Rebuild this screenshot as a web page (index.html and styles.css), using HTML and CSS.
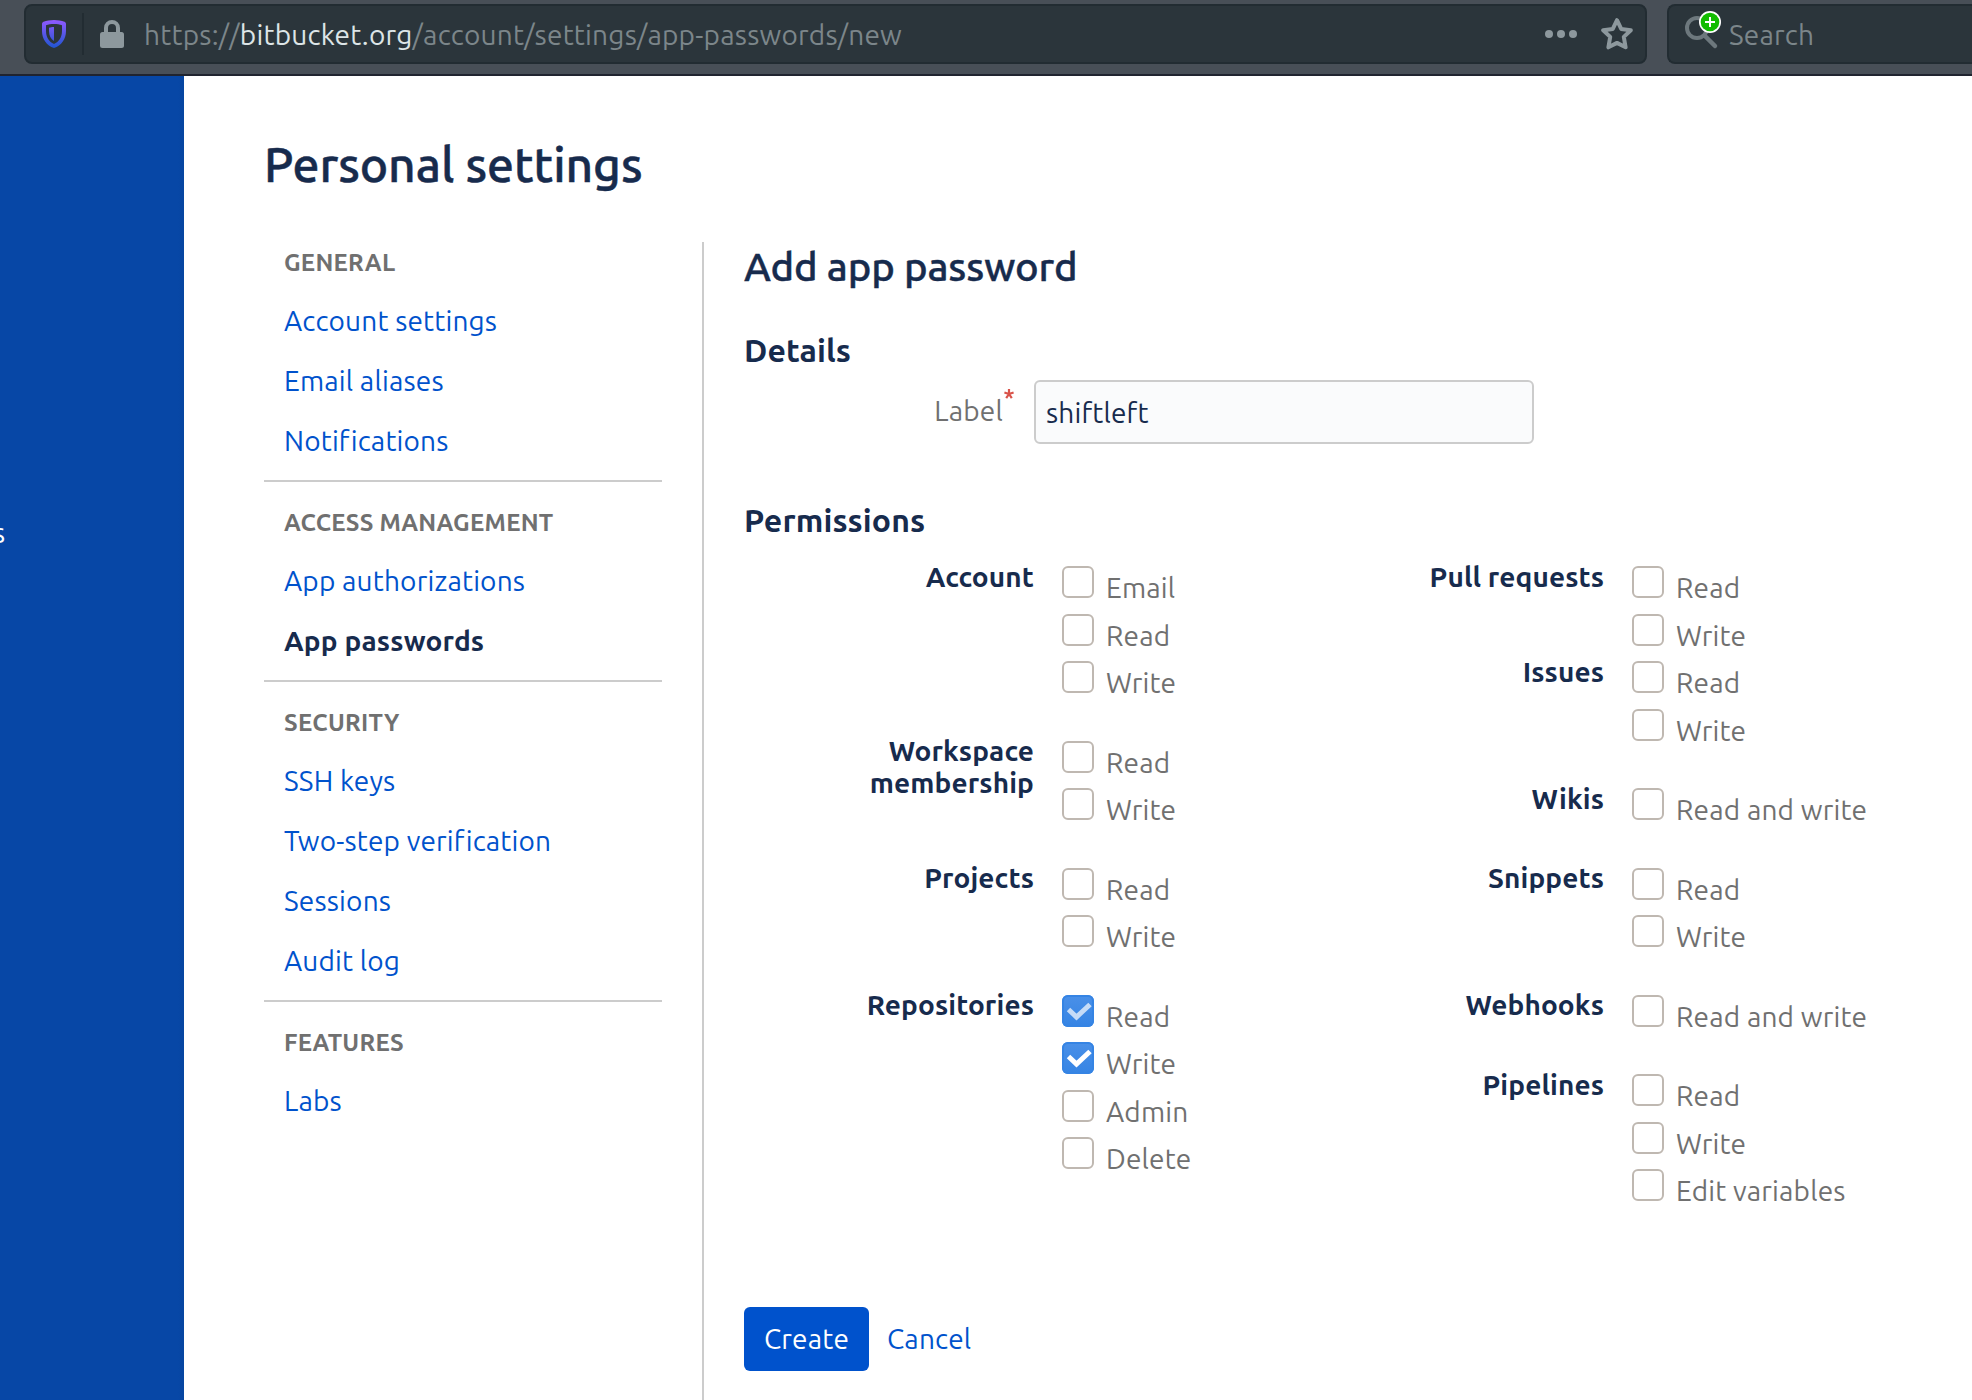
FILE: index.html
```html
<!DOCTYPE html>
<html lang="en">
<head>
<meta charset="utf-8">
<title>Personal settings</title>
<link rel="stylesheet" href="styles.css">
</head>
<body>
<header class="toolbar">
  <div class="urlbar">
    <svg class="shield" width="24" height="28" viewBox="0 0 24 28">
      <defs><linearGradient id="sg" x1="0" y1="0" x2="0" y2="1"><stop offset="0" stop-color="#9059ff"/><stop offset="1" stop-color="#1f55d0"/></linearGradient></defs>
      <path fill="url(#sg)" fill-rule="evenodd" d="M12 0C8 0 4.500 .8 1.600 1.800C.6 2.200 0 3 0 4v7c0 8 4.500 14.500 12 17c7.500-2.500 12-9 12-17V4c0-1-.6-1.800-1.600-2.200C19.500 .8 16 0 12 0zM12 4c3 0 5.700 .5 8 1.200V11c0 6-3 10.800-8 13c-5-2.200-8-7-8-13V5.200C6.300 4.500 9 4 12 4zM12 7c-2 0-3.500 .3-5 .7V11c0 4.500 1.800 8 5 10z"/>
    </svg>
    <span class="divider"></span>
    <svg class="lock" width="24" height="28" viewBox="0 0 24 28">
      <path d="M6 13V8a6 6 0 0 1 12 0v5" fill="none" stroke="#8d989d" stroke-width="4"/>
      <rect y="12" width="24" height="16" rx="2.500" fill="#8d989d"/>
    </svg>
    <div class="url">https://<span class="host">bitbucket.org</span>/account/settings/app-passwords/new</div>
    <svg class="dots" width="32" height="8" viewBox="0 0 32 8" fill="#8d989d"><circle cx="4" cy="4" r="4"/><circle cx="16" cy="4" r="4"/><circle cx="28" cy="4" r="4"/></svg>
    <svg class="star" width="32" height="32" viewBox="0 0 32 32">
      <path d="M16 2.200L20.200 10.900L29.800 12.200L22.800 18.900L24.600 29.300L16 24.900L7.400 29.300L9.200 18.900L2.200 12.200L11.800 10.900Z" fill="none" stroke="#8d989d" stroke-width="4" stroke-linejoin="round"/>
    </svg>
  </div>
  <div class="search">
    <svg width="38" height="40" viewBox="0 0 38 40">
      <circle cx="12" cy="18" r="10" fill="none" stroke="#6d787d" stroke-width="4"/>
      <path d="M19.500 25.500L30 36" stroke="#6d787d" stroke-width="4.500" stroke-linecap="round"/>
      <circle cx="25" cy="12" r="11" fill="#fff"/>
      <circle cx="25" cy="12" r="9.300" fill="#12bc00"/>
      <path d="M25 7v10M20 12h10" stroke="#fff" stroke-width="2"/>
    </svg>
    <span>Search</span>
  </div>
</header>
<div class="page">
  <aside class="rail"><span>s</span></aside>
  <main class="content">
    <h1>Personal settings</h1>
    <div class="columns">
      <nav class="nav">
        <section>
          <h2>GENERAL</h2>
          <a>Account settings</a><a>Email aliases</a><a>Notifications</a>
        </section>
        <section>
          <h2>ACCESS MANAGEMENT</h2>
          <a>App authorizations</a><a class="current">App passwords</a>
        </section>
        <section>
          <h2>SECURITY</h2>
          <a>SSH keys</a><a>Two-step verification</a><a>Sessions</a><a>Audit log</a>
        </section>
        <section>
          <h2>FEATURES</h2>
          <a>Labs</a>
        </section>
      </nav>
      <form class="form">
        <h2>Add app password</h2>
        <h3 class="details">Details</h3>
        <div class="field">
          <label>Label<svg width="10" height="10" viewBox="0 0 10 10"><path d="M5 5V0M5 5L.4 3.500M5 5L9.600 3.500M5 5L2.200 9.200M5 5L7.800 9.200" stroke="#d9534a" stroke-width="2.200"/></svg></label>
          <div class="input">shiftleft</div>
        </div>
        <h3>Permissions</h3>
        <div class="permissions">
          <div>
            <div class="group"><h4>Account</h4><ul><li><i></i><span>Email</span></li><li><i></i><span>Read</span></li><li><i></i><span>Write</span></li></ul></div>
            <div class="group"><h4>Workspace membership</h4><ul><li><i></i><span>Read</span></li><li><i></i><span>Write</span></li></ul></div>
            <div class="group"><h4>Projects</h4><ul><li><i></i><span>Read</span></li><li><i></i><span>Write</span></li></ul></div>
            <div class="group"><h4>Repositories</h4><ul>
              <li><i class="on locked"><svg width="32" height="32" viewBox="0 0 32 32"><path d="M6.500 14.500L14.500 22L28 9.500" fill="none" stroke="#fff" stroke-width="5"/></svg></i><span>Read</span></li>
              <li><i class="on"><svg width="32" height="32" viewBox="0 0 32 32"><path d="M6.500 14.500L14.500 22L28 9.500" fill="none" stroke="#fff" stroke-width="5"/></svg></i><span>Write</span></li>
              <li><i></i><span>Admin</span></li><li><i></i><span>Delete</span></li></ul></div>
          </div>
          <div>
            <div class="group joined"><h4>Pull requests</h4><ul><li><i></i><span>Read</span></li><li><i></i><span>Write</span></li></ul></div>
            <div class="group"><h4>Issues</h4><ul><li><i></i><span>Read</span></li><li><i></i><span>Write</span></li></ul></div>
            <div class="group"><h4>Wikis</h4><ul><li><i></i><span>Read and write</span></li></ul></div>
            <div class="group"><h4>Snippets</h4><ul><li><i></i><span>Read</span></li><li><i></i><span>Write</span></li></ul></div>
            <div class="group"><h4>Webhooks</h4><ul><li><i></i><span>Read and write</span></li></ul></div>
            <div class="group"><h4>Pipelines</h4><ul><li><i></i><span>Read</span></li><li><i></i><span>Write</span></li><li><i></i><span>Edit variables</span></li></ul></div>
          </div>
        </div>
        <div class="actions"><button type="button">Create</button><a>Cancel</a></div>
      </form>
    </div>
  </main>
</div>
</body>
</html>
```
FILE: styles.css
```css
* { box-sizing: border-box; }
body {
  margin: 0;
  height: 1400px;
  display: flex;
  flex-direction: column;
  overflow: hidden;
  background: #fff;
  color: #172b4d;
  font: 28px "Ubuntu", "Noto Sans", sans-serif;
  letter-spacing: .17px;
}
h1, h2, h3, h4, ul { margin: 0; padding: 0; list-style: none; }
svg { display: block; flex: none; }

/* Browser toolbar */
.toolbar {
  flex: none;
  height: 76px;
  display: flex;
  gap: 20px;
  padding: 4px 0 0 24px;
  background: #484f57;
  border-bottom: 2px solid #20242f;
}
.urlbar, .search {
  height: 60px;
  display: flex;
  align-items: center;
  background: #2b353b;
  border: 2px solid #222c32;
  border-radius: 8px;
  color: #7c868a;
  line-height: 57px;
}
.urlbar { width: 1623px; padding: 0 12px 0 16px; }
.shield { margin-top: -1px; }
.divider { width: 2px; height: 42px; margin: 0 16px; background: #222c32; }
.url { flex: 1; margin-left: 20px; white-space: nowrap; letter-spacing: .22px; }
.host { color: #dde5e7; }
.dots { margin-right: 24px; }
.search {
  flex: 1;
  padding-left: 16px;
  border-right: 0;
  border-radius: 8px 0 0 8px;
}
.search svg { margin-right: 6px; margin-top: -8px; }

/* Page frame */
.page { flex: 1; display: flex; }
.rail {
  width: 184px;
  padding-top: 437px;
  background: linear-gradient(to left, #0645a0, #0747a6 6px);
  color: #fff;
  line-height: 40px;
}
.rail span { margin-left: -7px; }
.content {
  flex: 1;
  display: flex;
  flex-direction: column;
  padding: 58px 0 0 80px;
}
h1 {
  font-size: 48px;
  font-weight: 500;
  line-height: 60px;
  letter-spacing: -.07px;
  -webkit-text-stroke: .5px;
}
.columns { flex: 1; display: flex; margin-top: 48px; }

/* Settings navigation */
.nav { width: 398px; }
.nav section { padding-top: 1px; }
.nav section + section { margin-top: 9px; padding-top: 21px; border-top: 2px solid #ccc; }
.nav h2 {
  margin: 0 0 8px 20px;
  color: #707070;
  font-size: 24px;
  font-weight: 700;
  line-height: 40px;
  letter-spacing: .26px;
}
.nav a {
  display: block;
  margin-left: 20px;
  color: #0052cc;
  line-height: 60px;
}
.nav a.current { color: #172b4d; font-weight: 700; }

/* App password form */
.form {
  flex: 1;
  margin-left: 40px;
  padding-left: 40px;
  border-left: 2px solid #ccc;
}
.form h2 {
  font-size: 40px;
  font-weight: 500;
  line-height: 50px;
  letter-spacing: -.14px;
  -webkit-text-stroke: .4px;
}
.form h3 { font-size: 32px; font-weight: 700; line-height: 40px; letter-spacing: .12px; }
.form h3.details { margin: 38px 0 10px; }
.field { display: flex; gap: 20px; margin-bottom: 56px; }
.field label {
  width: 270px;
  display: flex;
  gap: 1px;
  justify-content: flex-end;
  color: #707070;
  line-height: 62px;
}
.field label svg { margin-top: 9px; }
.input {
  width: 500px;
  height: 64px;
  padding-left: 10px;
  border: 2px solid #ccc;
  border-radius: 6px;
  background: #fafbfc;
  line-height: 61px;
}
.permissions { display: grid; grid-template-columns: 570px 570px; margin-top: 20px; }
.group { display: flex; gap: 28px; padding-bottom: 32.100px; }
.group.joined { padding-bottom: 0; }
.group h4 {
  width: 290px;
  margin-top: .6px;
  text-align: right;
  font-size: 28px;
  font-weight: 700;
  line-height: 32px;
  letter-spacing: .12px;
}
.group li {
  display: flex;
  gap: 12px;
  height: 47.500px;
  color: #707070;
  line-height: 48px;
}
.group li span { margin-top: 4.050px; white-space: nowrap; }
.group i {
  width: 32px;
  height: 32px;
  margin-top: 6px;
  border: 2px solid #bfb8b1;
  border-radius: 6px;
}
.group i.on { border: 0; background: linear-gradient(#4a90e8, #3584e4); box-shadow: inset 0 0 0 2px #3584e4; }
.group i.locked svg { opacity: .7; }
.actions { display: flex; align-items: center; gap: 18px; margin-top: 64px; }
.actions button {
  width: 125px;
  height: 64px;
  padding: 0;
  border: 0;
  border-radius: 6px;
  background: #0052cc;
  color: #fff;
  font: inherit;
  letter-spacing: inherit;
}
.actions a { color: #0052cc; line-height: 64px; }
```
